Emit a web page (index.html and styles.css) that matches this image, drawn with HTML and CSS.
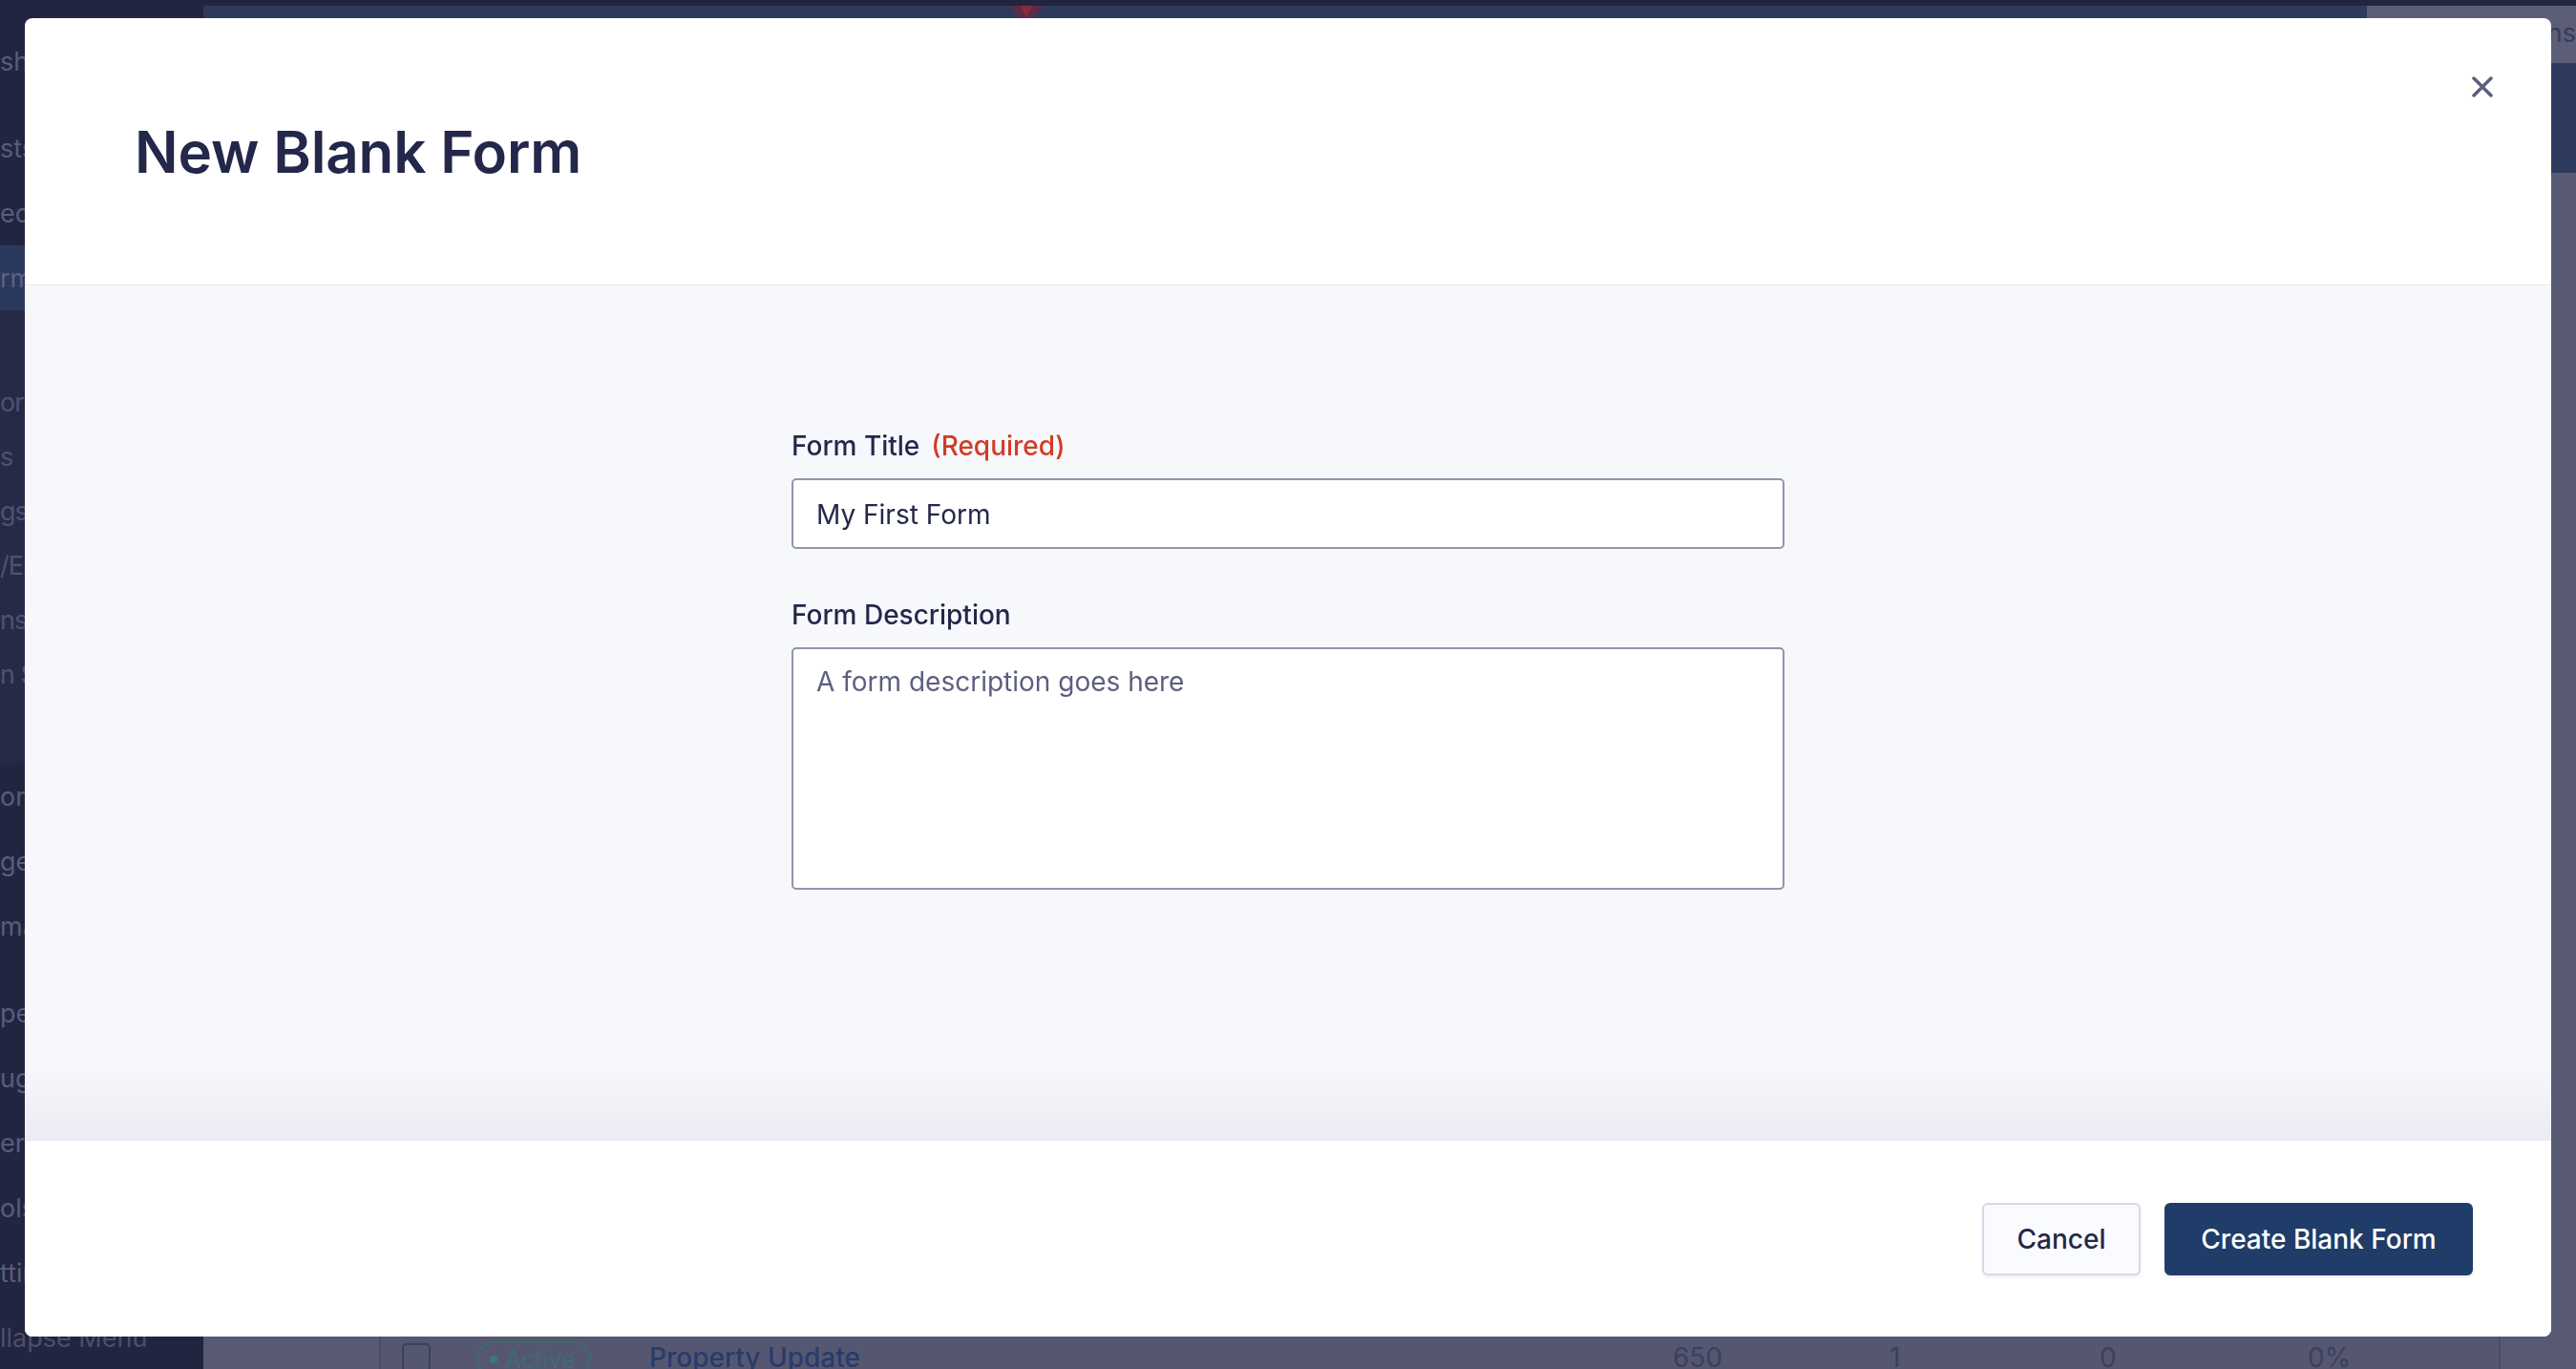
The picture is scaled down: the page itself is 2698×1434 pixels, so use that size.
FILE: index.html
```html
<!DOCTYPE html>
<html lang="en">
<head>
<meta charset="utf-8">
<title>New Blank Form</title>
<link rel="stylesheet" href="styles.css">
</head>
<body>
<div class="app">
  <aside class="sidebar">
    <nav class="nav-top">
      <div class="nav-item">shboard</div>
      <div class="nav-item spaced">sts</div>
      <div class="nav-item">edia</div>
      <div class="nav-item active">rms</div>
    </nav>
    <div class="submenu">
      <div class="sub-item">orms</div>
      <div class="sub-item">s</div>
      <div class="sub-item">gs</div>
      <div class="sub-item">/Export</div>
      <div class="sub-item">ns</div>
      <div class="sub-item">n Settings</div>
    </div>
    <nav class="nav-bottom">
      <div class="nav-item">orkflows</div>
      <div class="nav-item">ges</div>
      <div class="nav-item">mail</div>
      <div class="nav-item spaced">pes</div>
      <div class="nav-item">ugins</div>
      <div class="nav-item">ers</div>
      <div class="nav-item">ols</div>
      <div class="nav-item">ttings</div>
      <div class="nav-item muted">llapse Menu</div>
    </nav>
  </aside>

  <main class="main">
    <div class="topbar">
      <div class="topbar-title">
        <svg class="brand" viewBox="0 0 40 40" width="40" height="40" aria-hidden="true">
          <path d="M2 0 L38 0 L20 22 Z" fill="#5c2b45"/>
          <path d="M14 0 L26 0 L20 12 Z" fill="#8a2b3c"/>
        </svg>
      </div>
      <div class="topbar-actions">Actions</div>
    </div>
    <div class="hero"></div>
    <div class="content">
      <div class="table">
        <div class="table-body"></div>
        <div class="row">
          <div class="cell-check"><span class="checkbox"></span></div>
          <div class="cell-status"><span class="pill"><span class="dot"></span>Active</span></div>
          <div class="cell-name">Property Update</div>
          <div class="cell-num w1">650</div>
          <div class="cell-num w2">1</div>
          <div class="cell-num w3">0</div>
          <div class="cell-num last">0%</div>
        </div>
      </div>
    </div>
  </main>
</div>

<div class="backdrop">
  <div class="modal" role="dialog" aria-labelledby="modal-title">
    <header class="modal-header">
      <h1 id="modal-title" class="modal-title">New Blank Form</h1>
      <button class="close" type="button" aria-label="Close">
        <svg viewBox="0 0 22 22" width="22" height="22">
          <path d="M2 2 L20 20 M20 2 L2 20" stroke="#5b5e7c" stroke-width="3.5" stroke-linecap="round" fill="none"/>
        </svg>
      </button>
    </header>
    <section class="modal-body">
      <form class="form">
        <div class="field">
          <label class="label" for="title">Form Title <span class="required">(Required)</span></label>
          <input id="title" class="input" type="text" value="My First Form">
        </div>
        <div class="field">
          <label class="label" for="desc">Form Description</label>
          <textarea id="desc" class="textarea" placeholder="A form description goes here"></textarea>
        </div>
      </form>
    </section>
    <footer class="modal-footer">
      <button class="btn btn-secondary" type="button">Cancel</button>
      <button class="btn btn-primary" type="button">Create Blank Form</button>
    </footer>
  </div>
</div>
</body>
</html>
```

FILE: styles.css
```css
html, body {
  margin: 0;
  padding: 0;
}

body {
  width: 2698px;
  height: 1434px;
  overflow: hidden;
  background: #22253f;
  font-family: Inter, "Noto Sans", "Liberation Sans", sans-serif;
}

.app {
  display: flex;
  height: 1434px;
}

.sidebar {
  width: 213px;
  flex: none;
  background: #22253f;
  overflow: hidden;
}

.nav-top {
  padding-top: 30px;
}

.nav-item,
.sub-item {
  display: flex;
  align-items: center;
  font-size: 27px;
  white-space: pre;
  color: #5a5c7a;
}

.nav-item {
  height: 68px;
}

.nav-item.spaced {
  margin-top: 23px;
}

.nav-item.active {
  background: #2c395e;
  color: #5c6283;
}

.nav-item.muted {
  color: #4c4e6c;
}

.submenu {
  background: #272a46;
  padding: 68px 0 65px;
}

.sub-item {
  height: 57px;
  color: #4f5171;
  letter-spacing: -1px;
}

.main {
  flex: 1;
  margin-top: 6px;
  display: flex;
  flex-direction: column;
  background: #555771;
}

.topbar {
  display: flex;
  height: 60px;
  flex: none;
}

.topbar-title {
  flex: 1;
  background: #2e3a5d;
  padding-left: 842px;
}

.brand {
  display: block;
}

.topbar-actions {
  width: 219px;
  background: #5c5e78;
  color: #383b59;
  font-size: 27px;
  line-height: 58px;
  text-align: right;
  white-space: nowrap;
  overflow: hidden;
}

.hero {
  height: 115px;
  flex: none;
  background: #2e3a5d;
}

.content {
  flex: 1;
  padding: 40px 79px 0 184px;
  background: #585a74;
}

.table {
  border-left: 2px solid #4b4d68;
  border-right: 2px solid #4b4d68;
  background: #555771;
  height: 100%;
}

.table-body {
  height: 1167px;
}

.row {
  display: flex;
  align-items: center;
  height: 68px;
  padding-left: 22px;
  font-size: 28px;
  color: #3c3f5e;
}

.cell-check {
  width: 78px;
}

.checkbox {
  display: block;
  width: 26px;
  height: 26px;
  border: 2px solid #3d405d;
  border-radius: 5px;
}

.cell-status {
  width: 181px;
}

.pill {
  display: inline-flex;
  align-items: center;
  gap: 8px;
  box-sizing: border-box;
  width: 120px;
  height: 38px;
  padding-left: 12px;
  border: 2px solid #3e6a70;
  border-radius: 19px;
  color: #3f6b72;
  font-size: 25px;
}

.dot {
  flex: none;
  width: 8px;
  height: 8px;
  border-radius: 50%;
  background: #3d7a6c;
}

.cell-name {
  width: 1072px;
  color: #283b6b;
  font-weight: 500;
}

.cell-num.w1 { width: 227px; }
.cell-num.w2 { width: 220px; }
.cell-num.w3 { width: 218px; }
.cell-num.last { flex: 1; }

/* ---------- modal ---------- */
.backdrop {
  position: fixed;
  inset: 0;
  box-sizing: border-box;
  padding: 19px 26px 34px;
  display: flex;
}

.modal {
  position: relative;
  flex: 1;
  display: flex;
  flex-direction: column;
  background: #ffffff;
  border-radius: 8px;
  overflow: hidden;
}

.modal-header {
  flex: none;
  height: 280px;
  box-sizing: border-box;
  display: flex;
  align-items: center;
  padding-left: 115px;
  border-bottom: 1px solid #e7e8f2;
}

.modal-title {
  margin: 0;
  font-size: 60px;
  font-weight: 600;
  color: #23274a;
  letter-spacing: -0.1px;
}

.close {
  position: absolute;
  top: 61px;
  right: 61px;
  width: 22px;
  height: 22px;
  padding: 0;
  border: 0;
  background: none;
  cursor: pointer;
}

.close svg {
  display: block;
}

.modal-body {
  flex: 1;
  padding-top: 150px;
  background: linear-gradient(to bottom, #f7f8fc 0, #f7f8fc calc(100% - 80px), #ebebf3 100%);
}

.form {
  width: 1040px;
  margin: 0 auto;
}

.field + .field {
  margin-top: 51px;
}

.label {
  display: flex;
  gap: 12px;
  margin-bottom: 16px;
  font-size: 28px;
  font-weight: 500;
  line-height: 36px;
  color: #23274a;
}

.required {
  color: #d03c25;
  font-weight: 500;
}

.input,
.textarea {
  display: block;
  box-sizing: border-box;
  width: 100%;
  margin: 0;
  border: 2px solid #9294ae;
  border-radius: 5px;
  background: #ffffff;
  font-family: Inter, "Noto Sans", "Liberation Sans", sans-serif;
  font-size: 28px;
  font-weight: 400;
  color: #23274a;
  outline: none;
}

.input {
  height: 74px;
  padding: 2px 24px 0;
}

.textarea {
  height: 254px;
  padding: 16px 24px;
  line-height: 36px;
  resize: none;
}

.textarea::placeholder {
  color: #5d5f7e;
  opacity: 1;
}

.modal-footer {
  flex: none;
  height: 205px;
  display: flex;
  align-items: center;
  justify-content: flex-end;
  gap: 25px;
  padding-right: 82px;
  background: #ffffff;
}

.btn {
  height: 76px;
  box-sizing: border-box;
  padding: 0;
  border-radius: 6px;
  font-family: Inter, "Noto Sans", "Liberation Sans", sans-serif;
  font-size: 28px;
  font-weight: 500;
  cursor: pointer;
  box-shadow: 0 2px 3px rgba(30, 35, 80, 0.08);
}

.btn-secondary {
  width: 166px;
  background: #fafbfe;
  border: 2px solid #d6d8ea;
  color: #23274a;
}

.btn-primary {
  width: 323px;
  background: #203c69;
  border: 2px solid #203c69;
  color: #ffffff;
}
```
